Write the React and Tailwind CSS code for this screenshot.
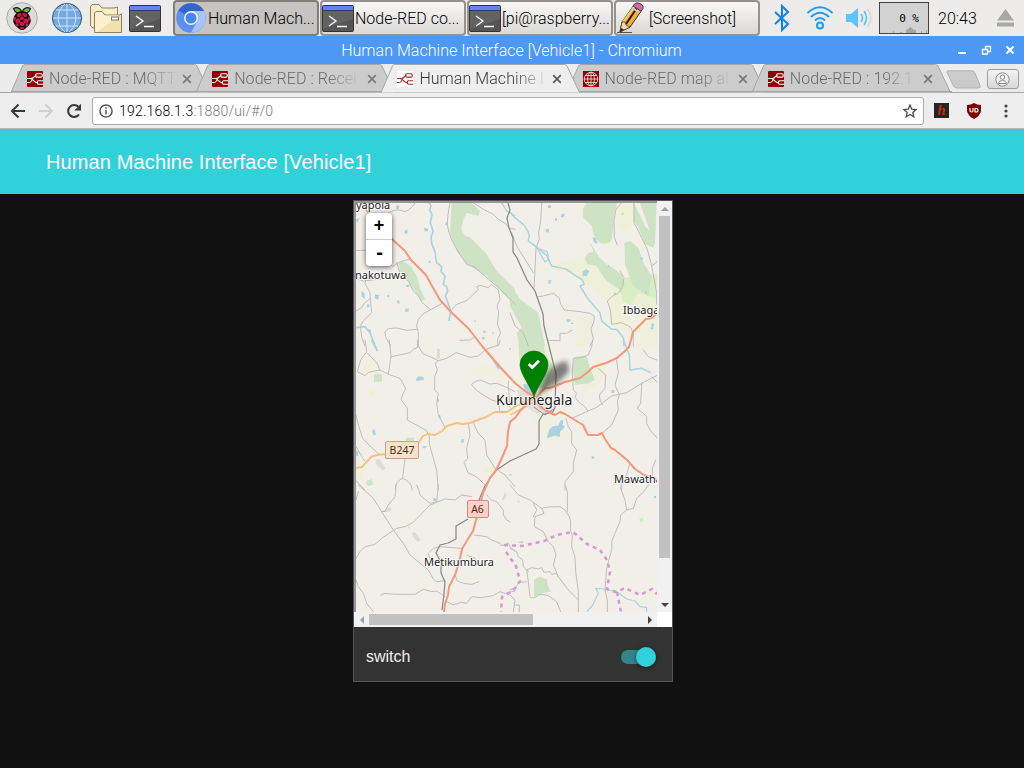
import React from "react";

const ui = "font-['Roboto',sans-serif] font-light";

function Raspberry() {
  return (
    <svg width="32" height="32" viewBox="0 0 32 32">
      <circle cx="16" cy="16" r="15.3" fill="#dcdcdc" stroke="#a9a9a9" strokeWidth="1" />
      <path d="M16 10C14 5 10 5 7.500 6.500C9 11 12 12 16 10C20 12 23 11 24.500 6.500C22 5 18 5 16 10Z" fill="#6cb93a" stroke="#17220c" strokeWidth="1.200" />
      <path d="M16 9C11 9 8 13 7.500 17C6.500 19 8 23 11 25C13 27.500 15 28 16 28C17 28 19 27.500 21 25C24 23 25.500 19 24.500 17C24 13 21 9 16 9Z" fill="#1c0610" />
      <g fill="#c9174b">
        <ellipse cx="13.200" cy="13" rx="2.600" ry="1.700" transform="rotate(-28 13.200 13)" />
        <ellipse cx="18.800" cy="13" rx="2.600" ry="1.700" transform="rotate(28 18.800 13)" />
        <circle cx="16" cy="16.200" r="2" />
        <ellipse cx="12" cy="19" rx="2.500" ry="2.600" />
        <ellipse cx="20" cy="19" rx="2.500" ry="2.600" />
        <ellipse cx="9" cy="16.800" rx="1.100" ry="2.100" />
        <ellipse cx="23" cy="16.800" rx="1.100" ry="2.100" />
        <circle cx="16" cy="22" r="2.300" />
        <ellipse cx="11" cy="23" rx="1.800" ry="1.400" transform="rotate(45 11 23)" />
        <ellipse cx="21" cy="23" rx="1.800" ry="1.400" transform="rotate(-45 21 23)" />
        <ellipse cx="16" cy="26" rx="2.200" ry="1.100" />
      </g>
    </svg>
  );
}

function Globe() {
  return (
    <svg width="32" height="32" viewBox="0 0 32 32">
      <circle cx="16" cy="16" r="14.600" fill="#76aade" stroke="#2f5680" strokeWidth="1" />
      <path d="M2 16H30M4.500 8H27.500M4.500 24H27.500M16 1.500V30.500M14 2C5 9 5 23 14 30M18 2C27 9 27 23 18 30" fill="none" stroke="#d4e8fb" strokeWidth="0.900" />
    </svg>
  );
}

function Folders() {
  return (
    <svg width="34" height="32" viewBox="0 0 34 32">
      <path d="M1.500 4.500L3 2.500H10L13 6H25L28.500 5V25L4 26L1.500 24Z" fill="#f7ebc8" stroke="#8d815b" />
      <path d="M5.500 30.500V11L7 9.500H13L16 13H31L32.500 11.500V30.500Z" fill="#f4e2ad" stroke="#8d815b" />
      <path d="M6 30V11.500L7.500 10H12.500L16 13.500L30 13.500L8 30Z" fill="#fbf1d0" />
      <rect x="22.500" y="15" width="7" height="3" fill="#fff" stroke="#777" />
    </svg>
  );
}

function Terminal() {
  return (
    <svg width="32" height="27" viewBox="0 0 32 27" className="shrink-0">
      <rect x="0.500" y="0.500" width="31" height="26" rx="1" fill="#555" stroke="#333" />
      <path d="M1 6H31V14L1 24Z" fill="#636363" />
      <rect x="1" y="1" width="30" height="4.500" fill="#6385f0" />
      <path d="M1 5.500H31" stroke="#333b66" />
      <path d="M7 11L14 16L7 21M15 21.500H25" fill="none" stroke="#fff" strokeWidth="1.300" />
    </svg>
  );
}

function Chromium() {
  return (
    <svg width="30" height="30" viewBox="0 0 30 30" className="shrink-0">
      <circle cx="15" cy="15" r="14.700" fill="#5c8ff0" />
      <path d="M15 15L2.500 7.300A14.700 14.700 0 0 1 28 8H15Z" fill="#3366c8" />
      <path d="M15 8H28A14.700 14.700 0 0 1 15 29.700L21 18.500Z" fill="#a6c4fb" />
      <circle cx="15" cy="15" r="7" fill="#f4f7fd" />
      <circle cx="15" cy="15" r="5.500" fill="#4688f1" />
    </svg>
  );
}

function Pencil() {
  return (
    <svg width="30" height="32" viewBox="0 0 30 32" className="shrink-0">
      <path d="M1 30.500H16" stroke="#555" />
      <path d="M4 30L6 20L18 3L26 8L14 25Z" fill="#f0ae3d" stroke="#3d3216" />
      <path d="M10 22L21.500 5" stroke="#26221a" strokeWidth="2" />
      <path d="M7 20L19 3.500" stroke="#f9cd72" strokeWidth="2" />
      <path d="M4 30L6 20L9 20L10 23L14 25Z" fill="#f2dbb2" stroke="#3d3216" strokeWidth="0.700" />
      <path d="M4 30L5 26L8 27.500Z" fill="#222" />
      <path d="M17 4L19 1.500Q21 0 25 2Q28 4 27 6.500L25 9Z" fill="#c86fa9" stroke="#613750" />
      <path d="M16 6L23.500 10.500" stroke="#ccc" strokeWidth="2" />
    </svg>
  );
}

function NodeRed({ light }) {
  const c = light ? "#a52a2a" : "#fff";
  return (
    <svg width="16" height="16" viewBox="0 0 16 16" className="shrink-0">
      <rect width="16" height="16" rx="1" fill={light ? "#fff" : "#8f0000"} />
      <path d="M0 7.500H4C8 7.500 6.500 4.500 9.500 4.500M3 7.500C6.500 7.500 6.500 11.800 10.500 11.800" fill="none" stroke={c} strokeWidth="1.200" />
      <rect x="8.600" y="2.700" width="6.600" height="3.400" rx="1.200" fill="none" stroke={c} strokeWidth="1.100" />
      <path d="M16 9.800H11.500Q10.300 9.800 10.300 11.500Q10.300 13.200 11.500 13.200H16" fill="none" stroke={c} strokeWidth="1.100" />
      <path d="M0 11.500H2.500Q4.500 11.500 5 8.500" fill="none" stroke={c} strokeWidth="1" />
    </svg>
  );
}

function RedGlobe() {
  return (
    <svg width="16" height="16" viewBox="0 0 16 16" className="shrink-0">
      <rect width="16" height="16" fill="#8f0000" />
      <g fill="none" stroke="#f3d6d6" strokeWidth="0.900">
        <circle cx="8" cy="8" r="6.800" />
        <ellipse cx="8" cy="8" rx="3.400" ry="6.800" />
        <path d="M8 1V15M1 8H15M2.200 4.500H13.800M2.200 11.500H13.800" />
      </g>
    </svg>
  );
}

function TaskButton({ icon, label, active }) {
  return (
    <div
      className={`flex h-9 w-[146px] shrink-0 items-center rounded-[4px] border-2 text-[16px] whitespace-nowrap text-black ${
        active ? "gap-0.5 border-[#817d79] bg-[#c6c3c0] pl-px" : "gap-px border-[#96928e] bg-gradient-to-b from-[#f8f8f7] to-[#dbd9d7]"
      }`}
    >
      {icon}
      <span className="pt-px">{label}</span>
    </div>
  );
}

function Tab({ icon, title, active }) {
  return (
    <div className={`relative flex h-7 w-[185.2px] shrink-0 items-center pl-4 ${active ? "z-10" : ""}`}>
      <svg className="absolute top-0 left-0" width="200" height="29" viewBox="0 0 200 29">
        <path
          d="M0 28.500L11.500 2Q12.300 .5 14 .5H183.500Q185 .5 186 2L198.500 28.500"
          fill={active ? "#eeeeee" : "#cccccc"}
          stroke="#a6a6a6"
        />
        {!active && <path d="M0 27.500H200" stroke="#a6a6a6" />}
      </svg>
      <div className="relative flex items-center pt-px">
        {icon}
        <div className="ml-1.5 w-[124px]">
          <span
            className={`inline-block bg-clip-text pt-px text-[16px] tracking-[0.06px] whitespace-nowrap text-transparent bg-gradient-to-r from-75% ${
              active ? "from-[#333] to-[#33333318]" : "from-[#666] to-[#66666618]"
            }`}
          >
            {title}
          </span>
        </div>
        <svg width="10" height="10" viewBox="0 0 10 10" className="ml-[9px]">
          <path d="M1.200 1.200L8.800 8.800M8.800 1.200L1.200 8.800" stroke={active ? "#5a5a5a" : "#7a7a7a"} strokeWidth="1.700" />
        </svg>
      </div>
    </div>
  );
}

const Label = ({ x, y, size, children }) => (
  <text x={x} y={y} fontSize={size} fill="#222" stroke="#fff" strokeWidth="2" strokeOpacity="0.75" paintOrder="stroke" strokeLinejoin="round">
    {children}
  </text>
);

function Map() {
  return (
    <svg width="301" height="409" viewBox="356 203 301 409" fontFamily="'Noto Sans', sans-serif" className="block">
      <defs>
        <filter id="soft" x="-40%" y="-40%" width="180%" height="180%">
          <feGaussianBlur stdDeviation="2.800" />
        </filter>
      </defs>
      <rect x="356" y="203" width="301" height="409" fill="#f2efe9" />

      {/* farmland and woods */}
      <g transform="translate(510 196) scale(.33333)">
        <path d="M125 210L170 195L225 185L290 240L345 285L330 330L370 380L350 405L300 390L290 310L215 250L150 225Z" fill="#eff0d8" />
        <path d="M320 30L365 22L372 75L350 110L318 95Z" fill="#eff0d8" />
        <path d="M200 365L250 355L250 410L235 450H195Z" fill="#eff0d8" opacity=".7" />
        <path d="M345 245L440 235V380L400 335L340 320L330 285Z" fill="#cdebb0" opacity=".65" />
        <path d="M365 320L385 290L440 310V450H380Z" fill="#eff0d8" opacity=".8" />
        <g fill="#cde3c4">
          <path d="M230 20H322L312 60L306 125Q300 150 270 140Q248 125 246 90L220 65L218 40Z" />
          <path d="M370 20L384 45L405 90L420 105L400 50L390 20H440L435 140L430 155L405 145L385 95L372 75Z" />
          <path d="M240 138L265 180L290 205L335 235L345 270L330 282L285 250L260 210L232 205L224 185L235 170L250 168Z" />
          <path d="M343 140L360 135L385 155L400 200L425 240L415 300L370 270L345 205Z" />
          <path d="M0 265L30 310L85 350L105 450H30L20 410L35 395L0 330Z" />
        </g>
      </g>
      <g transform="translate(350 196) scale(.33333)">
        <g fill="#cde3c4">
          <path d="M305 20H365L390 45L385 60L350 50L340 70L334 100L345 120L360 123L410 175L440 225L495 280V330L445 275L410 240L350 205L320 165L300 110Z" />
          <path d="M145 200L160 196L182 210L200 240L210 275L225 310L215 315L185 270L150 225Z" />
        </g>
      </g>
      <g transform="translate(510 340) scale(.33333)">
        <path d="M40 60L110 20L145 70L150 120L90 180L20 190L25 120Z" fill="#eff0d8" opacity=".8" />
        <path d="M210 120L265 60L290 75L280 120L220 165Z" fill="#eff0d8" opacity=".7" />
        <path d="M60 195L110 200L145 260L190 290L110 300L70 240Z" fill="#eff0d8" opacity=".5" />
        <path d="M25 0H100L105 40L130 80L110 145L55 140L30 80Z" fill="#cde3c4" />
        <path d="M195 50L230 48L240 85L255 120L235 130L195 135L187 80Z" fill="#cde3c4" />
        <path d="M20 150L70 145L110 180L130 215L80 220L35 195Z" fill="#dedbd7" opacity=".8" />
      </g>
      <g transform="translate(350 340) scale(.33333)">
        <path d="M365 85L410 75L450 95L480 120L455 130L430 110L380 105Z" fill="#eff0d8" opacity=".75" />
        <path d="M35 75L65 55L95 80L65 100L40 90Z" fill="#eff0d8" opacity=".75" />
        <path d="M72 103H96V125H72ZM168 293H192V302H168ZM50 422L65 418L70 433L58 438L48 433Z" fill="#cde3c4" />
        <path d="M76 360L88 356L107 385L98 392L80 375ZM262 25L270 28V55L260 58Z" fill="#dedbd7" />
        <path d="M60 150H72V170H60ZM20 395H38V415H20ZM400 385L430 375L445 390L410 400Z" fill="#eff0d8" />
      </g>
      <g transform="translate(350 485) scale(.33333)" fill="#dedbd7">
        <path d="M108 70L120 66L126 76L115 82ZM455 45L465 22L470 30L462 45ZM185 145L195 140L212 165L205 172L192 160ZM172 120L182 128L178 134Z" />
      </g>
      <g transform="translate(510 485) scale(.33333)" fill="#cdebb0">
        <path d="M72 285L88 275L110 282L115 305L123 320L100 323L72 335Z" fill="#cde3c4" />
        <path d="M388 100L400 98V110L390 110Z" opacity=".7" />
      </g>

      {/* water */}
      <g fill="none" stroke="#aad3df" strokeWidth="3.500" strokeLinejoin="round">
        <g transform="translate(350 196) scale(.33333)">
          <path d="M238 20L243 30L239 42L246 55L241 80L249 105L243 125L246 145L256 170L257 185L260 200L275 212L273 226L285 240L280 265L290 272L293 285L286 300L290 310L302 345L297 375" strokeWidth="5" />
          <path d="M18 395L45 392L60 410L75 450" strokeWidth="5" />
          <path d="M455 20L470 45L495 60" strokeWidth="4" />
        </g>
        <g transform="translate(510 196) scale(.33333)">
          <path d="M0 48L15 65L45 90L58 115L55 135L78 152L110 178L125 210L170 220L195 238L218 252L222 265L210 270L235 310L270 350L275 375L305 400L320 400L340 425L342 450" strokeWidth="4.500" />
          <path d="M90 158L112 168L117 190L105 198L80 155" />
        </g>
        <g transform="translate(510 340) scale(.33333)">
          <path d="M340 0L358 45L360 90L395 85L422 98" strokeWidth="4.500" />
        </g>
        <g transform="translate(350 340) scale(.33333)">
          <path d="M65 0L83 33M430 60L447 87" strokeWidth="6" />
        </g>
        <g transform="translate(510 485) scale(.33333)">
          <path d="M230 380L247 362L265 325L257 310L280 312L320 320L350 342L375 348L390 365L410 367V380" />
        </g>
      </g>
      <g fill="#aad3df">
        <g transform="translate(350 196) scale(.33333)">
          <path d="M138 30L147 27V39H140ZM165 103L172 101V113L163 112ZM222 95L234 98V106H224ZM288 77L293 80L291 88L286 87ZM35 285L44 292V310L34 300ZM75 295L88 298L84 312L74 306ZM53 323L59 326L56 335L50 332ZM112 297H118V303H112ZM142 313L149 315L148 324L141 320ZM165 338L176 337V347L166 348ZM18 70L28 66L22 82ZM169 266H178V273H169ZM236 195H242V200H236ZM54 398L64 403L60 415ZM400 404H407V411H400ZM427 407L432 410L428 416ZM373 373H377V378H373ZM396 424H404V430H396Z" />
        </g>
        <g transform="translate(510 196) scale(.33333)">
          <path d="M114 28H122V36H114ZM155 54L165 53L160 64H152ZM106 100L117 98L118 109H108ZM135 67H141V74H135ZM248 123L257 127L263 145L251 138ZM218 228L228 219L238 225L230 240H217ZM115 253L124 252L121 264H115ZM170 370H181V377H170ZM183 380H190V384H183ZM295 205L300 215L293 213ZM312 290H318V297H312ZM392 183L400 187L396 193L391 190ZM425 382L432 384L430 400H422ZM335 50H340V56H335ZM405 287H411V292H405Z" />
        </g>
        <g transform="translate(350 340) scale(.33333)">
          <path d="M197 118L207 109L220 111L222 119L200 123ZM67 275L72 265L78 283L70 287ZM217 319L232 318L222 327ZM335 296L343 299L340 310L333 307ZM261 178H267V185H261ZM265 223L272 227V235H267ZM478 24H483V29H478ZM18 330L25 337L23 348H18ZM479 402H484V407H479Z" />
        </g>
        <g transform="translate(510 340) scale(.33333)">
          <path d="M110 295L118 268L130 258L145 257L152 240L160 241L158 255L165 260L150 275L150 290L133 287ZM38 132L63 135L66 158L52 165ZM304 150H313V159H304ZM245 349H252V356H245Z" />
        </g>
        <g transform="translate(510 485) scale(.33333)">
          <path d="M432 33H438V40H432ZM22 172L40 168L36 175ZM20 47L28 49V53ZM-230 40H-222V48H-230Z" />
        </g>
      </g>

      {/* minor roads */}
      <g fill="none" stroke="#bababc" strokeWidth="2.800" strokeLinejoin="round" strokeLinecap="round">
        <g transform="translate(350 196) scale(.33333)">
          <path d="M195 20Q190 35 165 47Q150 40 135 42L115 50M18 163H47M128 212L150 197L180 190M140 200L150 232L175 255L190 285L205 300L215 318L240 340M50 245L45 262L60 290L62 322L65 350L40 375Q30 385 32 400Q33 425 45 450M18 345L35 335L42 322L60 308M277 322L240 342L220 353L205 370L200 390L205 410V450M200 400L170 403L140 396L115 398L104 408L108 425L122 450M302 346L320 325L345 316L355 310L385 280L380 272L390 268L415 275L424 265L445 282L450 310L441 330L446 350L442 385L452 410L443 430V450M18 248L40 255L100 248M330 433L360 432L372 425M300 20Q292 60 292 85Q295 130 350 205L372 212L445 275L495 325M370 20L400 40L430 55L445 70L470 85L475 95L495 100" />
        </g>
        <g transform="translate(510 196) scale(.33333)">
          <path d="M95 20L92 75L86 110L88 130L78 155L72 278M5 110L20 150L45 190L70 230M84 302L100 300L130 292L147 305L152 325L163 342L210 347L240 352L253 360L252 375L243 400L250 430L240 450M118 433L150 434V412L170 412L187 402M335 20L318 40L312 75L313 125L322 147M372 20V80L395 125L412 160L425 210L440 290V325M425 210L440 198M330 225L342 245L338 270L325 292L308 300L292 315L302 345L305 385L335 380L360 392L370 410V450M0 350L15 390L40 410L55 450" />
        </g>
        <g transform="translate(350 340) scale(.33333)">
          <path d="M45 0L50 35L32 60L22 95L45 107L55 97L90 90L115 102M53 40L83 72L90 92M118 0L123 50L115 103L150 115L167 145L160 160L153 178L172 205V240L205 258L230 272L238 290V310L247 345L260 390L265 450M123 50L150 45L180 38L190 28L203 22V0M203 15L220 42L240 50L265 62L290 55L318 38L340 45L360 52L385 48L405 30L420 23L447 15L450 0M265 62L255 70L262 90L254 110V150L265 160L260 190L265 225L285 262M18 225L25 255L38 295L60 318L86 342M18 320L43 362M355 250L360 285L350 325L353 355L342 367L355 400L370 405L385 415L405 435M370 248L385 280L405 300L410 345L435 385L465 405L495 440M165 355L158 415Q136 422 136 450M158 415Q185 425 187 450M495 155L465 140L440 130L420 132L390 120Q365 128 365 135Q375 150 400 165L425 180L475 195M475 125V140L480 200M448 195L450 218M18 422L45 450" />
        </g>
        <g transform="translate(510 340) scale(.33333)">
          <path d="M248 0L245 20L235 45L215 52L190 55L187 100L190 150L200 160L195 172L205 185L225 200L233 212M265 85L287 105L285 145L268 165L270 180L278 195M320 60L325 100L315 135L328 165L322 185L325 210L305 255L278 278M187 234L260 202L305 168L350 158L395 130L440 107" />
          <path d="M395 130L392 190L382 205L400 220L410 230V250L420 270L440 293M168 235L175 260L185 275V310L200 330L190 370V395L165 425V450M358 375L350 405L335 425V450M437 360L427 385V410M400 30L415 50L440 60M90 205L125 215M425 110L440 125" />
        </g>
        <g transform="translate(350 485) scale(.33333)">
          <path d="M25 0L70 40L95 80L130 135L160 175L180 210L235 255L250 282L260 290L285 287M137 0V20L135 35L115 60L105 78L95 80L110 78M200 0L208 20L210 30L240 55L260 50L265 0M18 220L30 200L45 185L75 178L95 160L140 130L165 125L190 112L240 60L285 42L315 45L335 30L365 35M410 30L425 45L440 50L460 75V90L470 105L480 110M372 150L410 155L425 165L450 175L455 182L475 175L480 185L495 200M335 190L270 185L250 190L235 205L240 220M315 270L322 288L340 295L365 298L387 290M93 330L105 325L135 328L195 328L220 313L245 320L260 318L285 335M290 350L310 360L335 352L350 355L365 335L390 338L430 332L450 320L465 325L495 318M18 285L25 305L40 325L50 355L70 380M18 45L25 20M350 210L375 220L380 235L410 240" />
        </g>
        <g transform="translate(510 485) scale(.33333)">
          <path d="M0 0L25 30L60 45L95 70L115 66L150 65L165 75L178 95L182 110L181 135L187 150L185 185L195 215L197 260L205 320V380M95 70L102 85L75 95L73 125L100 140L115 170L130 185L138 210L130 240L145 275L175 315L205 345M165 0L172 20V80M335 0L332 10L345 45L350 75L332 90L330 110L315 145L305 170L306 190L290 250L285 315L292 345V380M415 0L400 22L380 40L370 70L350 75M50 255L55 290L60 335Q70 345 85 330Q95 325 115 332L140 350L152 380M50 255L65 248L85 252L95 248L102 262L120 260L125 268L138 265L145 275M0 190L20 200L25 215L38 225L40 245L55 260M0 315L15 308L28 292L50 290M0 330L15 345L10 380M15 360H28V380M70 55L80 75L70 95" />
        </g>
      </g>

      {/* rail */}
      <g fill="none" stroke="#858585" strokeLinejoin="round">
        <path d="M508 203L510 210L507 218L509 228L513 238L513 252L517 258L527 280L535 291L543 314L544 326L549 346L556 374L555 408L552 413L543 414L539 421L539 444L536 449L510 461L495 471L485 486L479 500M468 519L456 526V539L448 543L440 545L436 553L441 562V573L445 582L444 594L442 610" strokeWidth="1.200" />
        <path d="M534 407L545 415L555 408" strokeWidth="0.900" />
      </g>

      {/* secondary road */}
      <path d="M356 468L362 467L371 457L377 455L385 454H409L419 442L423 436L427 434L435 435L442 431L447 426L457 423L463 424L470 423L486 417L495 412H507L516 406L534 397" fill="none" stroke="#f7c27a" strokeWidth="1.900" strokeLinejoin="round" />
      <path d="M510 415L534 402" fill="none" stroke="#f7c27a" strokeWidth="1.500" />

      {/* main roads */}
      <g fill="none" stroke="#f6967a" strokeWidth="2" strokeLinejoin="round">
        <path d="M361 203L376 223L392 239L405 251L411 260L426 275L432 286L440 300L452 313L468 328L482 346L500 367L515 383L525 391L536 398L541 392L545 388L550 388L565 382L580 378L588 372L593 367L606 363L617 358L624 352L629 347L631 340L633 332L641 324L646 319L652 318L657 313" />
        <path d="M533 398L528 403L520 411L516 417L510 422L508 432L507 446L501 460L495 472L490 478L483 493L476 520L473 531L468 539L462 549L459 563L455 575L449 587L448 595L445 604L444 612" />
        <path d="M535 402L546 411L555 415L560 412L565 414L583 425L588 435L598 435L602 433L605 439L611 448L615 450L627 460L635 469L644 475L650 477L657 479" />
      </g>
      <path d="M504 545L522 546L544 541L557 535L573 532L587 544L600 550L607 560L610 572L607 589L616 592L625 588L640 595L652 589L657 594M506 552L516 566L520 581L513 591L502 597L501 612M617 592L621 612" fill="none" stroke="#d69bd1" strokeWidth="2.600" strokeDasharray="4 4" />

      <Label x="356" y="209" size="11">yapola</Label>
      <Label x="355" y="279" size="11">nakotuwa</Label>
      <Label x="623" y="314" size="11">Ibbaga</Label>
      <Label x="614" y="483" size="11">Mawatha</Label>
      <Label x="424" y="566" size="11">Metikumbura</Label>

      <rect x="385.500" y="441.500" width="33" height="17" rx="1.500" fill="#f7e3cc" stroke="#c6a182" />
      <text x="402" y="453.500" fontSize="10.500" fill="#523213" textAnchor="middle">B247</text>
      <rect x="467.500" y="500.500" width="21" height="17" rx="1.500" fill="#f4d3ca" stroke="#d28b7c" />
      <text x="477.500" y="512.500" fontSize="10.500" fill="#6b1e10" textAnchor="middle">A6</text>

      {/* marker */}
      <path d="M536 396L546 374Q556 362 567 361L569 372L556 384Z" fill="#222" opacity=".55" filter="url(#soft)" />
      <Label x="496" y="404.500" size="14">Kurunegala</Label>
      <path d="M534 397.500C532 388 520 374 520 365A14 14 0 0 1 548 365C548 374 536 388 534 397.500Z" fill="#008000" stroke="#006a00" strokeWidth="0.600" />
      <path d="M528.800 364L532.300 367.500L539 360.700" fill="none" stroke="#fff" strokeWidth="2.800" />
    </svg>
  );
}

function Arrow({ d, dark }) {
  return (
    <svg width="8" height="8" viewBox="0 0 8 8">
      <path d={d} fill={dark ? "#444" : "#a0a0a0"} />
    </svg>
  );
}

export default function App() {
  return (
    <div className="flex h-[768px] w-[1024px] flex-col overflow-hidden bg-[#111111]">
      <div className={`${ui} flex h-9 shrink-0 items-center bg-[#edeceb]`}>
        <div className="flex w-[173px] shrink-0 items-center pl-[6px]">
          <Raspberry />
          <div className="ml-[13px]"><Globe /></div>
          <div className="ml-[6px]"><Folders /></div>
          <div className="ml-[6px]"><Terminal /></div>
        </div>
        <div className="flex gap-px">
          <TaskButton active icon={<Chromium />} label="Human Mach..." />
          <TaskButton icon={<Terminal />} label="Node-RED co..." />
          <TaskButton icon={<Terminal />} label="[pi@raspberry..." />
          <TaskButton icon={<div className="w-8 shrink-0"><Pencil /></div>} label="[Screenshot]" />
        </div>
        <svg width="16" height="28" viewBox="0 0 16 28" className="ml-[14px] shrink-0">
          <path d="M1 8L14 20L8 26V2L14 8L1 20" fill="none" stroke="#0b83f5" strokeWidth="2" />
        </svg>
        <svg width="28" height="26" viewBox="0 0 28 26" className="ml-[16px] shrink-0" fill="none" stroke="#1a9df5" strokeWidth="2">
          <path d="M1.500 8Q14 -3.500 26.500 8M5 12Q14 3.500 23 12M9 15.500Q14 10.500 19 15.500" />
          <circle cx="14" cy="20.500" r="3" />
        </svg>
        <svg width="28" height="24" viewBox="0 0 28 24" className="ml-[11px] shrink-0" fill="none" strokeWidth="1.700">
          <path d="M1 8H6L13 2V22L6 16H1Z" fill="#5cc4fa" />
          <path d="M16 8Q19 12 16 16M19 5Q24 12 19 19" stroke="#5cc4fa" />
          <path d="M22.500 3Q29 12 22.500 21" stroke="#d6d6d6" />
        </svg>
        <div className="relative ml-[6px] flex h-8 w-[50px] shrink-0 items-center justify-end border border-[#444] bg-[#d2d2d2] pt-[3px] pr-[9px] font-['DejaVu_Sans_Mono',monospace] text-[11px] font-normal text-black">
          <svg className="absolute bottom-0 left-0" width="48" height="6" viewBox="0 0 48 6">
            <path d="M13 6V4H14V6H20V5H22V6H26V3L28 2L30 0L32 1L34 3L36 3V6H41V4H42V6H46V3H47V6Z" fill="#a6a6a6" />
          </svg>
          <span className="relative">0 %</span>
        </div>
        <span className="ml-[9px] w-[40px] pt-px text-[16px] whitespace-nowrap text-black">20:43</span>
        <svg width="17" height="18" viewBox="0 0 17 18" className="ml-[19px] shrink-0" fill="#a8a8a8">
          <path d="M8.500 0L17 11.500H0ZM0 13.500H17V17.500H0Z" />
        </svg>
      </div>

      <div className={`${ui} relative flex h-7 shrink-0 items-center justify-center bg-[#4d97f5] text-[16px] text-white`}>
        <span className="pt-0.5 pr-px tracking-[0.03px] whitespace-nowrap">Human Machine Interface [Vehicle1] - Chromium</span>
        <svg width="60" height="12" viewBox="0 0 60 12" className="absolute top-2 right-[8px]" fill="none" stroke="#fff">
          <path d="M2 9H10" strokeWidth="2" />
          <path d="M29.500 5V2.500H34.500V7.500H32M26.500 5.500H31.500V10H26.500Z" strokeWidth="1.300" />
          <path d="M50.500 2.500L57.500 9.500M57.500 2.500L50.500 9.500" strokeWidth="2" />
        </svg>
      </div>

      <div className={`${ui} flex h-[29px] shrink-0 border-b border-[#a6a6a6] bg-[#ececec] pl-[11px]`}>
        <Tab icon={<NodeRed />} title="Node-RED : MQTT" />
        <Tab icon={<NodeRed />} title="Node-RED : Recei" />
        <Tab active icon={<NodeRed light />} title="Human Machine I" />
        <Tab icon={<RedGlobe />} title="Node-RED map al" />
        <Tab icon={<NodeRed />} title="Node-RED : 192.1" />
        <svg width="36" height="20" viewBox="0 0 36 20" className="mt-[6px] ml-[9px] shrink-0">
          <path d="M2 .8H26Q28 .8 29 3L34 15.500Q35 18 32.500 18H11Q8.500 18 7.500 16L1 2.500Q.5 .8 2 .8Z" fill="#cbcbcb" stroke="#b2b2b2" />
        </svg>
        <div className="mt-[5px] ml-[5px] flex h-5 w-8 shrink-0 items-center justify-center rounded-[3px] border border-[#9e9e9e] bg-gradient-to-b from-[#f3f3f3] to-[#d8d8d8]">
          <svg width="15" height="15" viewBox="0 0 15 15" fill="none" stroke="#8c8c8c">
            <circle cx="7.500" cy="7.500" r="6.700" fill="#eee" />
            <circle cx="7.500" cy="5.200" r="2.200" fill="#fff" />
            <path d="M3.500 11.500Q3.500 8.500 7.500 8.500Q11.500 8.500 11.500 11.500Z" fill="#fff" />
          </svg>
        </div>
      </div>

      <div className={`${ui} flex h-9 shrink-0 items-center border-b border-[#b4b4b4] bg-[#eeeeee] pl-[10px]`}>
        <svg width="74" height="18" viewBox="0 0 74 18" className="shrink-0" fill="none" stroke="#333b40" strokeWidth="2">
          <path d="M15 9H2.500M8.500 2.500L2 9L8.500 15.500" />
          <path d="M29 9H41.500M35.500 2.500L42 9L35.500 15.500" stroke="#cfcfcf" />
          <path d="M69 12.500A6 6 0 1 1 68.500 4.800" strokeWidth="2.100" />
          <path d="M71 1.800V8.500H64.300Z" fill="#333b40" stroke="none" />
        </svg>
        <div className="ml-2 flex h-7 w-[832px] items-center rounded-[3px] border border-[#ababab] bg-white px-[6px] text-[14px]">
          <svg width="14" height="14" viewBox="0 0 14 14" className="shrink-0" fill="none" stroke="#5a5a5a" strokeWidth="1.500">
            <circle cx="7" cy="7" r="6.100" />
            <path d="M7 6V10.500M7 3.300V4.800" />
          </svg>
          <span className="ml-[6px] flex-1 pt-0.5 tracking-[0.2px] text-black">
            192.168.1.3<span className="text-[#777]">:1880/ui/#/0</span>
          </span>
          <svg width="14" height="14" viewBox="0 0 14 14" fill="none" stroke="#4c4c4c" strokeWidth="1.300">
            <path d="M7 1L8.700 5.100L13.200 5.500L9.800 8.400L10.800 12.800L7 10.500L3.200 12.800L4.200 8.400L.8 5.500L5.300 5.100Z" />
          </svg>
        </div>
        <div className="ml-[10px] flex size-[15px] items-center justify-center bg-[#252525] font-['Liberation_Serif',serif] text-[15px] leading-none font-bold text-[#d0201a] italic">h</div>
        <svg width="14" height="16" viewBox="0 0 14 16" className="ml-[18px]">
          <path d="M7 0Q10 2 14 2V8Q13 13 7 16Q1 13 0 8V2Q4 2 7 0Z" fill="#800000" />
          <path d="M3 5V7.500Q3 9 4.500 9Q6 9 6 7.500V5M8 5.500V9H9Q11 9 11 7.200Q11 5.500 9 5.500Z" fill="none" stroke="#fff" strokeWidth="1.200" />
        </svg>
        <svg width="4" height="14" viewBox="0 0 4 14" className="ml-[23px]" fill="#444">
          <circle cx="2" cy="2" r="1.600" /><circle cx="2" cy="7" r="1.600" /><circle cx="2" cy="12" r="1.600" />
        </svg>
      </div>

      <div className="flex h-[65px] shrink-0 items-center bg-[#30d1d8] pl-[46px] font-['Liberation_Sans',sans-serif] text-[20px] tracking-[0.12px] text-white">
        Human Machine Interface [Vehicle1]
      </div>

      <div className="flex justify-center pt-[6px] pl-[2px] font-['Liberation_Sans',sans-serif]">
        <div className="flex h-[482px] w-[320px] flex-col border border-[#555] bg-[#333333]">
          <div className="flex h-[426px] shrink-0 flex-col bg-white">
            <div className="flex h-[411px]">
              <div className="relative w-[303px] border-t-2 border-l-2 border-[#979797]">
                <Map />
                <div className="absolute top-[10px] left-[10px] flex w-[26px] flex-col rounded-[4px] bg-white text-center font-bold text-black shadow-[0_1px_5px_rgba(0,0,0,0.65)]">
                  <div className="h-[27px] border-b border-[#ccc] text-[18px] leading-[25px]">+</div>
                  <div className="h-[26px] pl-px text-[20px] leading-[25px]">-</div>
                </div>
              </div>
              <div className="flex w-[15px] flex-col items-center bg-[#f1f1f1]">
                <div className="flex h-[15px] items-center"><Arrow d="M0 6L4 2L8 6Z" /></div>
                <div className="h-[342px] w-[11px] bg-[#c1c1c1]" />
                <div className="mt-auto flex h-[15px] items-center"><Arrow dark d="M0 2L4 6L8 2Z" /></div>
              </div>
            </div>
            <div className="flex h-[15px] w-[303px] items-center bg-[#f1f1f1]">
              <div className="flex w-[15px] justify-center"><Arrow d="M6 0L2 4L6 8Z" /></div>
              <div className="h-[11px] w-[164px] bg-[#c1c1c1]" />
              <div className="ml-auto flex w-[15px] justify-center"><Arrow dark d="M2 0L6 4L2 8Z" /></div>
            </div>
          </div>
          <div className="flex flex-1 items-center justify-between pt-[5px] pr-4 pl-3 text-[16px] text-[#eeeeee]">
            <span>switch</span>
            <div className="flex h-[14px] w-[35px] items-center justify-end rounded-full bg-[#32868a]">
              <div className="size-5 shrink-0 rounded-full bg-[#30d1d8] shadow-[0_1px_4px_rgba(0,0,0,0.5)]" />
            </div>
          </div>
        </div>
      </div>
    </div>
  );
}
